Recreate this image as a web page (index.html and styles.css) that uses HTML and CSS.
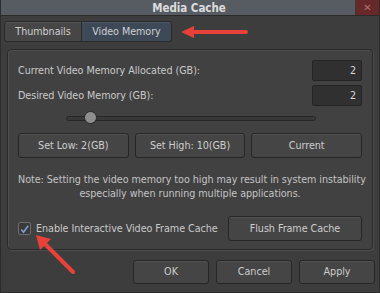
FILE: index.html
```html
<!DOCTYPE html>
<html>
<head>
<meta charset="utf-8">
<link rel="stylesheet" href="styles.css">
</head>
<body>
<div class="window">
  <div class="titlebar">
    <div class="title">Media Cache</div>
    <div class="close">&#x2715;</div>
  </div>
  <div class="tabs">
    <div class="tab">Thumbnails</div>
    <div class="tab active">Video Memory</div>
  </div>
  <div class="group">
    <div class="row first">
      <span class="label">Current Video Memory Allocated (GB):</span>
      <span class="field">2</span>
    </div>
    <div class="row">
      <span class="label">Desired Video Memory (GB):</span>
      <span class="field">2</span>
    </div>
    <div class="slider">
      <div class="track"><div class="knob"></div></div>
    </div>
    <div class="btnrow">
      <div class="btn">Set Low: 2(GB)</div>
      <div class="btn">Set High: 10(GB)</div>
      <div class="btn">Current</div>
    </div>
    <div class="note">Note: Setting the video memory too high may result in system instability<br>especially when running multiple applications.</div>
    <div class="cacherow">
      <div class="check">
        <span class="box"><svg width="12" height="12" viewBox="0 0 12 12"><path d="M2.5 6.5 L5 9.5 L10 2.5" fill="none" stroke="#7d9fd0" stroke-width="1.8"/></svg></span>
        <span>Enable Interactive Video Frame Cache</span>
      </div>
      <div class="btn flush">Flush Frame Cache</div>
    </div>
  </div>
  <div class="footer">
    <div class="btn fbtn">OK</div>
    <div class="btn fbtn">Cancel</div>
    <div class="btn fbtn">Apply</div>
  </div>
  <svg class="arrow arrow-top" width="70" height="14" viewBox="0 0 70 14">
    <path d="M66 7 L12 7" stroke="#e8413a" stroke-width="4" stroke-linecap="round"/>
    <path d="M1 7 L14 1 L14 13 Z" fill="#e8413a"/>
  </svg>
  <svg class="arrow arrow-bot" width="44" height="44" viewBox="0 0 44 44">
    <path d="M39 39 L11 11" stroke="#e8413a" stroke-width="4" stroke-linecap="round"/>
    <path d="M2 2 L17 6 L6 17 Z" fill="#e8413a"/>
  </svg>
</div>
</body>
</html>
```
FILE: styles.css
```css
* { box-sizing: border-box; }
html, body { margin: 0; padding: 0; }
body {
  width: 380px;
  height: 293px;
  background: #3d3d3d;
  font-family: "DejaVu Sans Condensed", "DejaVu Sans", sans-serif;
  font-size: 10.7px;
  letter-spacing: -0.05px;
  color: #c9c9c9;
  overflow: hidden;
  white-space: nowrap;
}
.window {
  position: relative;
  width: 380px;
  height: 293px;
  border-left: 1px solid #2c2c2c;
  border-right: 1px solid #2c2c2c;
  border-bottom: 1px solid #2c2c2c;
}
.titlebar {
  height: 16px;
  display: flex;
  background: #575c63;
  border-bottom: 1px solid #2a2a2a;
}
.title {
  flex: 1;
  text-align: center;
  font-weight: bold;
  font-size: 11.5px;
  line-height: 16px;
  color: #dcdcdc;
  padding-left: 22px;
}
.close {
  width: 24px;
  height: 15px;
  background: #662828;
  color: #b07070;
  font-family: "DejaVu Sans", sans-serif;
  font-size: 10px;
  font-weight: bold;
  line-height: 15px;
  text-align: center;
  border-left: 1px solid #3a3a3a;
}
.tabs {
  display: flex;
  padding: 5px 0 0 3px;
}
.tab {
  height: 21px;
  line-height: 19px;
  background: #464646;
  border: 1px solid #2a2a2a;
  border-radius: 3px 0 0 3px;
  color: #cfcfcf;
  box-shadow: inset 0 1px 0 #555;
  text-align: center;
}
.tab:first-child { width: 78px; }
.tab.active {
  background: #3e4957;
  border-radius: 0 3px 3px 0;
  border-left: none;
  width: 90px;
  box-shadow: inset 0 1px 0 #4c5868;
}
.group {
  margin: 7px 6px 0 6px;
  height: 201px;
  border: 1px solid #2a2a2a;
  border-radius: 4px;
  box-shadow: inset 1px 1px 0 #4e4e4e, 1px 1px 0 #4c4c4c;
  background: #414141;
  padding: 10px 10px 0 10px;
}
.row {
  display: flex;
  justify-content: space-between;
  align-items: center;
  height: 21px;
  margin-bottom: 4px;
}
.field {
  width: 50px;
  height: 21px;
  background: #303030;
  border: 1px solid #242424;
  border-radius: 2px;
  text-align: right;
  padding-right: 5px;
  line-height: 19px;
  color: #d8d8d8;
}
.slider {
  padding: 2px 0 0 48px;
  height: 21px;
}
.track {
  position: relative;
  width: 250px;
  height: 5px;
  margin-top: 4px;
  background: #393939;
  border: 1px solid #262626;
  border-radius: 3px;
}
.knob {
  position: absolute;
  left: 17px;
  top: -6px;
  width: 13px;
  height: 13px;
  border-radius: 50%;
  background: #8e8e8e;
  border: 1px solid #2a2a2a;
}
.btnrow {
  display: flex;
  gap: 6px;
  margin-top: 2px;
}
.btn {
  height: 25px;
  line-height: 23px;
  text-align: center;
  background: #454545;
  border: 1px solid #262626;
  border-radius: 3px;
  box-shadow: inset 0 1px 0 #525252;
  color: #cdcdcd;
}
.btnrow .btn { width: 112px; }
.note {
  text-align: center;
  margin-top: 15px;
  line-height: 14px;
  color: #c4c4c4;
}
.cacherow {
  display: flex;
  justify-content: space-between;
  align-items: center;
  margin-top: 15px;
}
.check {
  display: flex;
  align-items: center;
  gap: 5px;
}
.box {
  width: 13px;
  height: 13px;
  border: 1px solid #6c6c6c;
  border-radius: 2px;
  background: #3a3a3a;
  display: flex;
  align-items: center;
  justify-content: center;
}
.box svg { display: block; }
.flush { width: 134px; }
.footer {
  display: flex;
  justify-content: flex-end;
  gap: 7px;
  padding-right: 4px;
  margin-top: 10px;
}
.fbtn { width: 76px; height: 24px; line-height: 22px; }
.arrow { position: absolute; }
.arrow-top { left: 179px; top: 25px; }
.arrow-bot { left: 33px; top: 233px; }
```
